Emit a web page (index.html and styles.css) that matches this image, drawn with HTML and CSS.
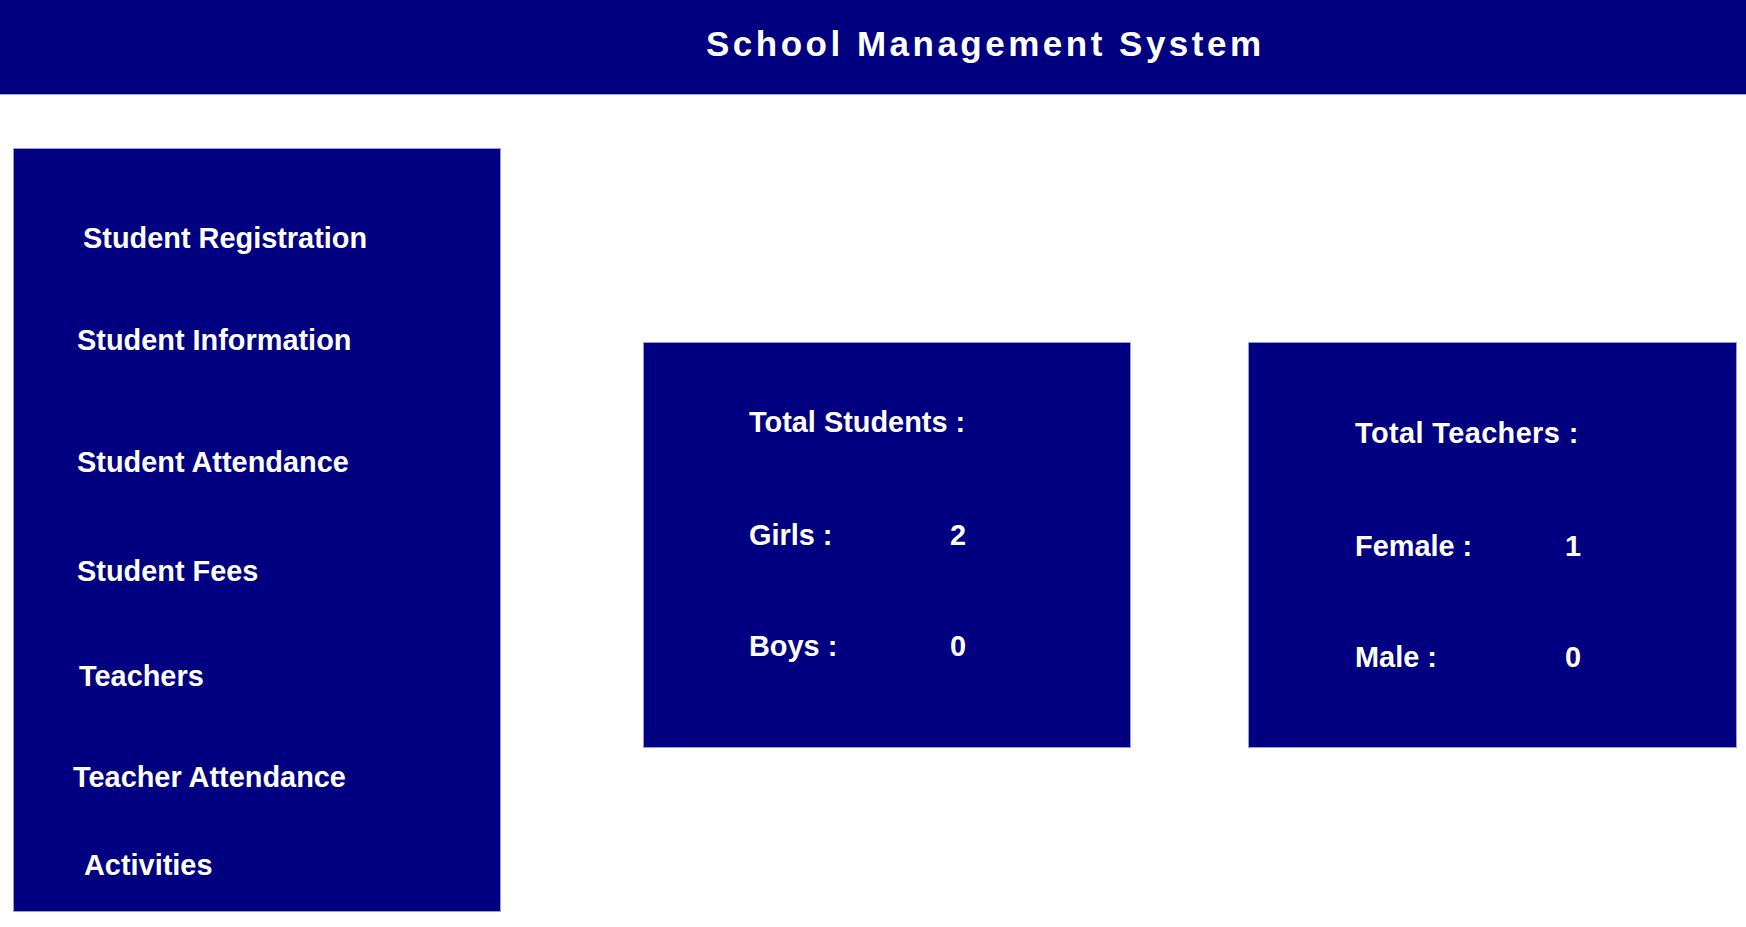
FILE: index.html
```html
<!DOCTYPE html>
<html lang="en">
<head>
<meta charset="utf-8">
<title>School Management System</title>
<link rel="stylesheet" href="styles.css">
</head>
<body>
<header class="topbar">
  <h1 class="title">School Management System</h1>
</header>
<main class="main">
  <nav class="sidebar">
    <a class="nav-item nav-registration">Student Registration</a>
    <a class="nav-item nav-information">Student Information</a>
    <a class="nav-item nav-attendance">Student Attendance</a>
    <a class="nav-item nav-fees">Student Fees</a>
    <a class="nav-item nav-teachers">Teachers</a>
    <a class="nav-item nav-teacher-attendance">Teacher Attendance</a>
    <a class="nav-item nav-activities">Activities</a>
  </nav>
  <section class="cards">
    <div class="card card-students">
      <div class="row"><span class="label">Total Students :</span><span class="value"></span></div>
      <div class="row"><span class="label">Girls :</span><span class="value">2</span></div>
      <div class="row"><span class="label">Boys :</span><span class="value">0</span></div>
    </div>
    <div class="card card-teachers">
      <div class="row"><span class="label">Total Teachers :</span><span class="value"></span></div>
      <div class="row"><span class="label">Female :</span><span class="value">1</span></div>
      <div class="row"><span class="label">Male :</span><span class="value">0</span></div>
    </div>
  </section>
</main>
</body>
</html>
```

FILE: styles.css
```css
* { box-sizing: border-box; }

html, body {
  margin: 0;
  padding: 0;
  background: #ffffff;
  font-family: "Liberation Sans", Arial, sans-serif;
  font-weight: bold;
  color: #ffffff;
}

.topbar {
  height: 95px;
  background: #000080;
  border-bottom: 1px solid #a8a8dc;
  padding: 24px 0 0 706px;
}

.title {
  margin: 0;
  font-size: 35px;
  line-height: 40px;
  letter-spacing: 3.5px;
  font-weight: bold;
}

.main {
  display: flex;
  align-items: flex-start;
  padding-left: 13px;
}

.sidebar {
  margin-top: 53px;
  width: 488px;
  height: 764px;
  background: #000080;
  border: 1px solid #9a9ada;
  display: flex;
  flex-direction: column;
  align-items: flex-start;
  padding-top: 73px;
}

.nav-item {
  display: block;
  font-size: 28.9px;
  line-height: 33px;
  white-space: nowrap;
  cursor: pointer;
}

.nav-registration { padding-left: 69px; }
.nav-information { margin-top: 69px; padding-left: 63px; }
.nav-attendance { margin-top: 89px; padding-left: 63px; }
.nav-fees { margin-top: 76px; padding-left: 63px; }
.nav-teachers { margin-top: 72px; padding-left: 65px; }
.nav-teacher-attendance { margin-top: 68px; padding-left: 59px; }
.nav-activities { margin-top: 55px; padding-left: 70px; }

.cards {
  display: flex;
  gap: 117px;
  margin-top: 247px;
  margin-left: 142px;
}

.card {
  height: 406px;
  background: #000080;
  border: 1px solid #9a9ada;
  display: flex;
  flex-direction: column;
}

.card-students {
  width: 488px;
  padding: 63px 0 0 105px;
  --label-width: 201px;
}

.card-teachers {
  width: 489px;
  padding: 74px 0 0 106px;
  --label-width: 210px;
}

.row {
  display: grid;
  grid-template-columns: var(--label-width) auto;
  font-size: 28.9px;
  line-height: 33px;
  white-space: nowrap;
}

.card-teachers .row:first-child { letter-spacing: 0.4px; }

.row + .row { margin-top: 80px; }
.row + .row + .row { margin-top: 78px; }
```
